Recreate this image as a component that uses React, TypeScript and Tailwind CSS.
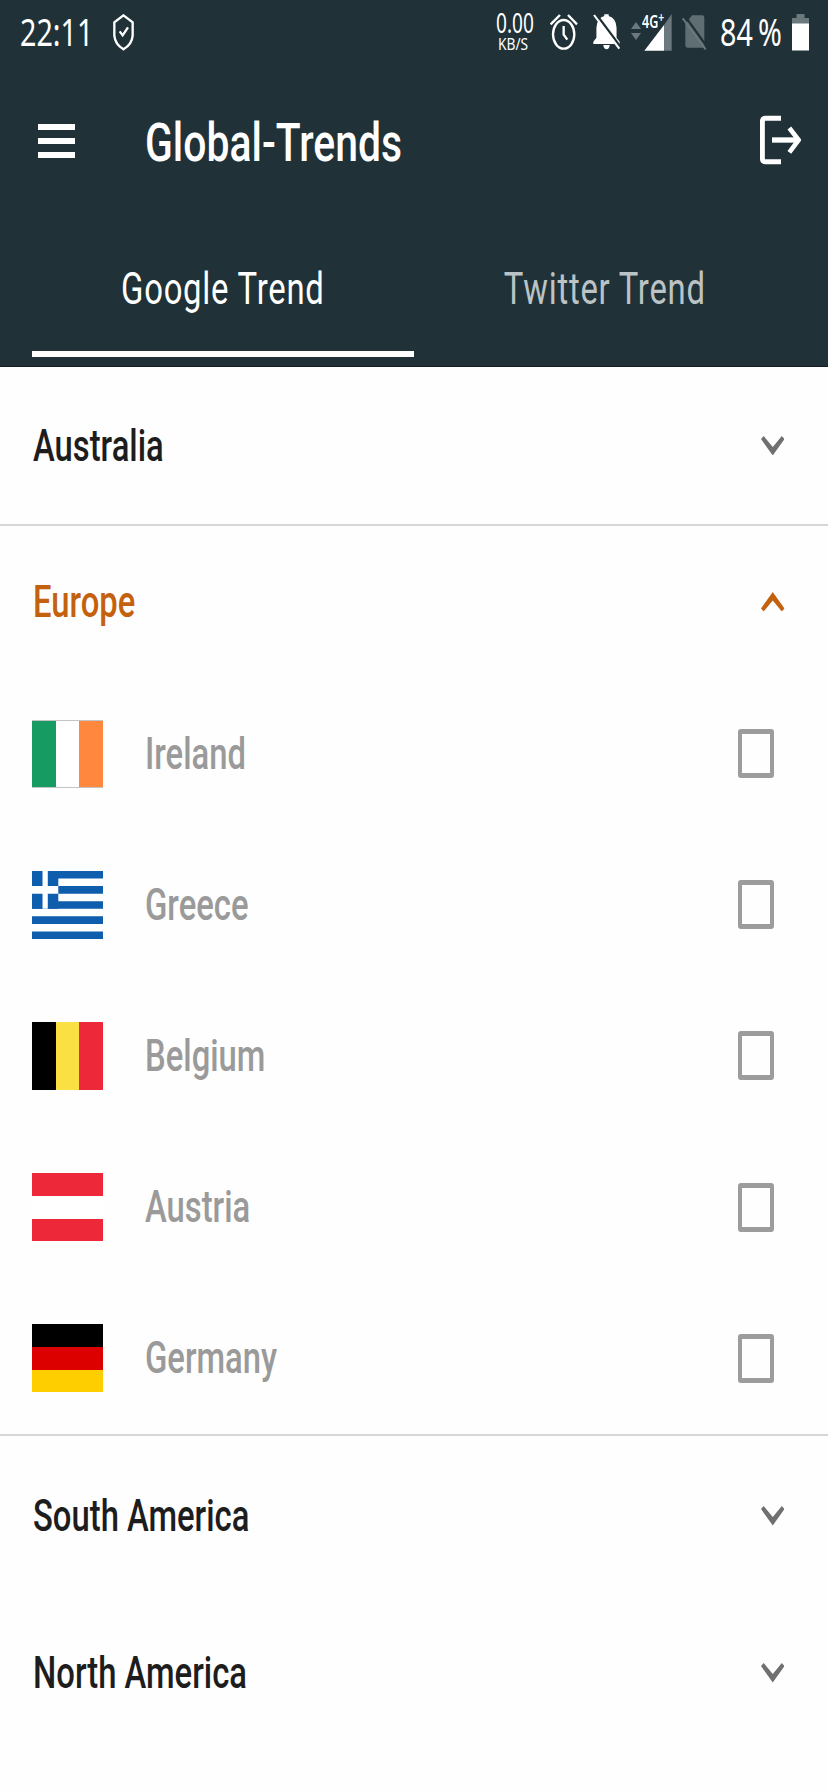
import type { ReactNode } from 'react';

function Roboto({ className = '', children }: { className?: string; children: ReactNode }) {
  return (
    <span className={`block font-['Roboto',sans-serif] whitespace-nowrap ${className}`}>
      {children}
    </span>
  );
}

function StatusBar() {
  return (
    <div className="flex h-16 items-center font-['Noto_Sans',sans-serif] text-white">
      <div className="ml-[20px] w-[92.5px] pb-[2px]">
        <span className="block origin-left scale-x-[0.745] text-[38.5px] leading-[62px] whitespace-nowrap">22:11</span>
      </div>
      <svg className="h-[37px] w-[21px]" viewBox="339 43 63 111" preserveAspectRatio="none" fill="none">
        <path d="M370.500 47 L398 68 V108 Q396 134 370.500 149 Q345 134 343 108 V68 Z" stroke="white" strokeWidth="7" />
        <path d="M359 95 L368 107 L384 83" stroke="white" strokeWidth="7" />
      </svg>
      <div className="ml-[362px] flex w-[53px] flex-col pb-[2px]">
        <span className="block origin-left scale-x-[0.72] text-[26.500px] leading-[26px] whitespace-nowrap">0.00</span>
        <span className="ml-[2.500px] block origin-left scale-x-[0.86] text-[16px] leading-[16px] whitespace-nowrap">KB/S</span>
      </div>
      <svg className="ml-[1px] h-[36px] w-[28px]" viewBox="238 46 84 108" preserveAspectRatio="none" fill="none" stroke="white">
        <ellipse cx="279" cy="107" rx="32" ry="43" strokeWidth="7" />
        <path d="M240 77 L268 49 M292 49 L319 77" strokeWidth="7" />
        <path d="M279 82 V108 L290 123" strokeWidth="7" />
      </svg>
      <svg className="mb-[1px] ml-[15px] h-[36px] w-[28px]" viewBox="367 41 82 108" preserveAspectRatio="none">
        <path d="M400 42 h13 v5 Q435 54 436 82 V112 L445 124 V131 H368 V124 L377 112 V82 Q378 54 400 47 Z" fill="white" />
        <path d="M397 134 H416 Q414 147 407 147 Q399 147 397 134 Z" fill="white" />
        <path d="M376 41 L448 140" stroke="#203238" strokeWidth="7" />
        <path d="M370 44 L444 145" stroke="white" strokeWidth="6" />
      </svg>
      <svg className="mb-[2px] ml-[10px] h-[18px] w-[10px]" viewBox="0 0 10 18" fill="#6b787d">
        <path d="M5 0 L10 7 H0 Z M0 11 H10 L5 18 Z" />
      </svg>
      <div className="relative ml-[3px] h-[37px] w-[28px]">
        <svg className="size-full" viewBox="520 42 84 111" preserveAspectRatio="none">
          <path d="M603 42 V152 H580 V75 Z" fill="#6b787d" />
          <path d="M580 75 V152 H521 Z" fill="white" />
        </svg>
        <span className="absolute top-[-2px] left-[-2px] origin-left scale-x-[0.74] text-[17px] leading-[20px] font-semibold whitespace-nowrap">
          4G<sup className="top-[-5px] text-[14px] leading-[0]">+</sup>
        </span>
      </div>
      <svg className="ml-[10px] h-[35px] w-[25px]" viewBox="635 44 75 105" preserveAspectRatio="none">
        <path d="M665 45 H696 Q702 45 702 52 V142 H651 Q645 142 645 134 V72 Z" fill="#5f6e73" />
        <path d="M643 46 L709 138" stroke="#203238" strokeWidth="7" />
        <path d="M637 54 L706 147" stroke="#6b787d" strokeWidth="6" />
      </svg>
      <div className="ml-[13.500px] w-[71.500px] pb-[2px]">
        <span className="block origin-left scale-x-[0.745] text-[38.500px] leading-[62px] [word-spacing:-3px] whitespace-nowrap">84 %</span>
      </div>
      <svg className="h-[37px] w-[17px]" viewBox="0 0 17 37">
        <path d="M4.500 0 H12.500 V4 H17 V10 H0 V4 H4.500 Z" fill="#6b787d" />
        <path d="M0 9.500 H17 V36.500 H0 Z" fill="white" />
      </svg>
    </div>
  );
}

function AppBar() {
  return (
    <div className="flex h-[155px] items-center">
      <div className="mb-[2px] ml-[38px] flex w-[37px] flex-col gap-[8px]">
        <div className="h-[6px] bg-white" />
        <div className="h-[6px] bg-white" />
        <div className="h-[6px] bg-white" />
      </div>
      <div className="ml-[69.500px] w-[615px] pt-[2px]">
        <Roboto className="origin-left scale-x-[0.767] text-[53.300px] leading-[60px] font-medium text-white">Global-Trends</Roboto>
      </div>
      <svg className="mb-[3px] h-[50px] w-[41px]" viewBox="117 76 123 150" preserveAspectRatio="none" fill="none" stroke="white">
        <path d="M180 86 H133 Q124 86 124 98 V204 Q124 216 133 216 H180" strokeWidth="15" />
        <path d="M153 151 H232" strokeWidth="16" />
        <path d="M205 115 L233 151 L205 188" strokeWidth="14" />
      </svg>
    </div>
  );
}

function Tab({ label, active = false }: { label: string; active?: boolean }) {
  return (
    <div
      className={`flex h-[138px] flex-1 justify-center border-b-[6px] pt-[45px] ${
        active ? 'border-white text-white' : 'border-transparent text-[#bcc3c6]'
      }`}
    >
      <Roboto className="scale-x-[0.755] text-[43.500px] leading-[52px] tracking-[1px]">{label}</Roboto>
    </div>
  );
}

function Chevron({ open = false }: { open?: boolean }) {
  return (
    <svg
      className={`h-[19.500px] w-[23.500px] ${open ? 'rotate-180 fill-[#c4610f]' : 'fill-[#707070]'}`}
      viewBox="180 111 70 58"
      preserveAspectRatio="none"
    >
      <path d="M180 120 L188 111 L215 144 L242 111 L250 120 L215 169 Z" />
    </svg>
  );
}

function Section({ label, open = false, className }: { label: string; open?: boolean; className: string }) {
  return (
    <div className={`flex items-center justify-between pr-11 pl-[32.500px] ${className}`}>
      <Roboto
        className={`origin-left scale-x-[0.754] pt-[2px] text-[43.500px] leading-[52px] font-medium ${
          open ? 'text-[#c4610f]' : 'text-[#1d1d1d]'
        }`}
      >
        {label}
      </Roboto>
      <Chevron open={open} />
    </div>
  );
}

function Bars({ colors, vertical = false }: { colors: string[]; vertical?: boolean }) {
  return (
    <div className={`flex size-full ${vertical ? 'flex-row' : 'flex-col'}`}>
      {colors.map((c, i) => (
        <div key={i} className={`flex-1 ${c}`} />
      ))}
    </div>
  );
}

function GreekFlag() {
  return (
    <svg className="size-full" viewBox="0 0 27 18" preserveAspectRatio="none">
      <rect width="27" height="18" fill="#fff" />
      <path d="M0 0H27V2H0Z M0 4H27V6H0Z M0 8H27V10H0Z M0 12H27V14H0Z M0 16H27V18H0Z" fill="#0f5dad" />
      <rect width="10" height="10" fill="#0f5dad" />
      <path d="M4 0H6V10H4Z M0 4H10V6H0Z" fill="#fff" />
    </svg>
  );
}

const countries: { name: string; flag: ReactNode }[] = [
  {
    name: 'Ireland',
    flag: (
      <div className="size-full border-y border-[#c4c4c4]">
        <Bars vertical colors={['bg-[#169b62]', 'bg-white', 'bg-[#ff883e]']} />
      </div>
    ),
  },
  { name: 'Greece', flag: <GreekFlag /> },
  { name: 'Belgium', flag: <Bars vertical colors={['bg-black', 'bg-[#fae042]', 'bg-[#ed2939]']} /> },
  { name: 'Austria', flag: <Bars colors={['bg-[#ed2939]', 'bg-white', 'bg-[#ed2939]']} /> },
  { name: 'Germany', flag: <Bars colors={['bg-black', 'bg-[#dd0000]', 'bg-[#ffce00]']} /> },
];

function Country({ name, flag }: { name: string; flag: ReactNode }) {
  return (
    <div className="flex h-[151.200px] items-center pr-[54px] pl-8">
      <div className="h-[68px] w-[71px]">{flag}</div>
      <div className="ml-[42px] flex-1">
        <Roboto className="origin-left scale-x-[0.754] pt-[2px] text-[43.500px] leading-[52px] font-medium text-[#9a9a9a]">
          {name}
        </Roboto>
      </div>
      <div className="h-[49px] w-[36px] rounded-[3px] border-x-4 border-y-5 border-[#9c9c9c]" />
    </div>
  );
}

export default function App() {
  return (
    <div className="h-[1792px] w-[828px] overflow-hidden bg-[#fefefe]">
      <header className="h-[367px] border-b border-[#131c22] bg-[#203238]">
        <StatusBar />
        <AppBar />
        <div className="flex px-8">
          <Tab label="Google Trend" active />
          <Tab label="Twitter Trend" />
        </div>
      </header>
      <main>
        <Section label="Australia" className="h-[157px]" />
        <div className="h-[2px] bg-[#d6d6d6]" />
        <Section label="Europe" open className="h-[152px]" />
        {countries.map((c) => (
          <Country key={c.name} {...c} />
        ))}
        <div className="h-[2px] bg-[#d6d6d6]" />
        <Section label="South America" className="h-[160px]" />
        <Section label="North America" className="h-[154px]" />
      </main>
    </div>
  );
}
